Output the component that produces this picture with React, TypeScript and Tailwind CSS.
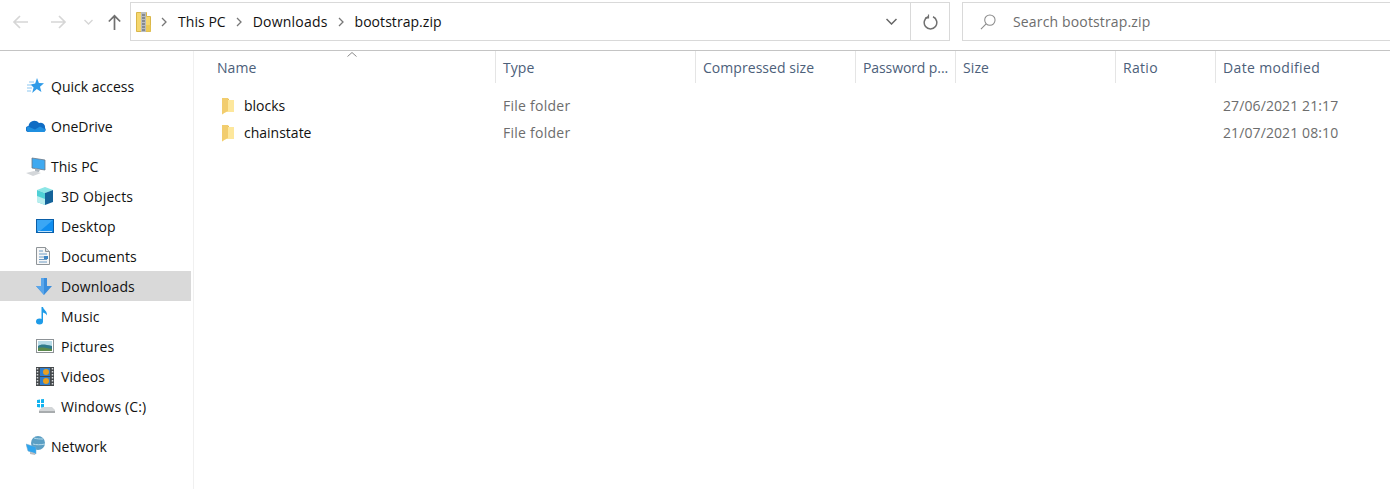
const font = { fontFamily: '"Open Sans", "Noto Sans", sans-serif' }

const COLS = [
  { label: 'Name', w: 'w-[302px] pl-[23px] tracking-[0.05px]' },
  { label: 'Type', w: 'w-[200px] pl-[7px] tracking-[0.05px]' },
  { label: 'Compressed size', w: 'w-[160px] pl-[7px] tracking-[0.05px]' },
  { label: 'Password p...', w: 'w-[100px] pl-[7px] tracking-[-0.1px]' },
  { label: 'Size', w: 'w-[160px] pl-[7px] tracking-[0.1px]' },
  { label: 'Ratio', w: 'w-[100px] pl-[7px] tracking-[0.3px]' },
  { label: 'Date modified', w: 'w-[175px] pl-[7px] tracking-[0.35px]' },
]

const Zip = () => (
  <svg width="15" height="20" viewBox="0 0 15 20">
    <path d="M.5.500h10v4h4v15H.5z" fill="#f5d76e" stroke="#d9b64a" />
    <rect x="10" y="13" width="4.500" height="6.500" fill="#ecca55" />
    <rect x="5" y="0" width="5" height="20" fill="#b9bcc0" />
    <path d="M6 3h3M6 6h3M6 9h3M6 12h3M6 15h3M6 18h3" stroke="#55585c" strokeWidth="1" />
  </svg>
)

const Folder = () => (
  <svg width="12" height="18" viewBox="0 0 12 18">
    <path d="M0 1h5l2 1v12l-7 2z" fill="#eac158" />
    <path d="M0 3h12v12H4l-4 2.500z" fill="#fde79c" />
    <path d="M0 1h6v13l-4 2-2 1.500z" fill="#f2cd6e" />
  </svg>
)

const Star = () => (
  <svg width="18" height="16" viewBox="0 0 18 16">
    <path d="M11 0l1.900 5 5.100.3-4 3.400 1.400 5.300-4.600-3L6.200 15l1.400-5.600L4.500 6.500l4.700-.9z" fill="#2f9be8" />
    <path d="M3 4h5M1 7h5M1 10h5M1 13h4" stroke="#8cc8f2" strokeWidth="1.100" />
  </svg>
)

const Cloud = () => (
  <svg width="20" height="14" viewBox="0 0 20 14">
    <path d="M3 13a3 3 0 0 1-.5-6A6 6 0 0 1 13 4a4.500 4.500 0 0 1 6 5 2.500 2.500 0 0 1-1 4z" fill="#0f6cc4" />
    <path d="M3 13a3 3 0 0 1-1-5.500l7 3 5-3 5.500 3a2.500 2.500 0 0 1-1.500 2.500z" fill="#1f8fe0" />
  </svg>
)

const Pc = () => (
  <svg width="20" height="19" viewBox="0 0 20 19">
    <path d="M6 1l13 2v10L6 11z" fill="#3fa9f0" stroke="#6b7785" strokeWidth="0.800" />
    <path d="M9 11.500l5 1-1 2.500-4-.5z" fill="#aeb6bd" />
    <path d="M0 16l8-2 7 2-8 3z" fill="#d4d7da" />
  </svg>
)

const Cube = () => (
  <svg width="18" height="18" viewBox="0 0 18 18">
    <path d="M9 0l8 3-8 3-8-3z" fill="#8ce6e6" />
    <path d="M1 3l8 3v12l-8-3z" fill="#4fd0d6" />
    <path d="M17 3L9 6v12l8-3z" fill="#14639a" />
    <path d="M1 9l8 3v6l-8-3z" fill="#b8eeee" />
  </svg>
)

const Desktop = () => (
  <svg width="18" height="14" viewBox="0 0 18 14">
    <rect x="0.500" y="0.500" width="17" height="13" fill="#0f8ef0" stroke="#0a5ea8" />
    <path d="M1 1h16L4 12H1z" fill="#3aa7f5" />
    <path d="M2 12.500h14" stroke="#bfe3fb" />
  </svg>
)

const Docs = () => (
  <svg width="14" height="18" viewBox="0 0 14 18">
    <path d="M.5.500h9l4 4v13H.5z" fill="#f7f7f7" stroke="#8f9498" />
    <path d="M9.500.500v4h4" fill="#dfe2e4" stroke="#8f9498" />
    <path d="M3 4h4M3 7h8M3 10h8M3 12.500h8M3 15h8" stroke="#6f9cc4" strokeWidth="1" />
    <rect x="8" y="9" width="4" height="3" fill="#3e86c4" />
  </svg>
)

const DownArrow = () => (
  <svg width="16" height="17" viewBox="0 0 16 17">
    <path d="M5 0h6v8h5l-8 9-8-9h5z" fill="#3a8ddc" />
    <path d="M5 0h3v17L0 8h5z" fill="#5aa6ea" />
  </svg>
)

const Music = () => (
  <svg width="12" height="18" viewBox="0 0 12 18">
    <ellipse cx="3.500" cy="14.500" rx="3.500" ry="3" fill="#1e9be8" />
    <path d="M5.500 14.500V0h1.500c.5 3 4.500 4 4 8.500C10 6.500 8.500 6 7 5.500v9z" fill="#1e9be8" />
  </svg>
)

const Pictures = () => (
  <svg width="18" height="14" viewBox="0 0 18 14">
    <rect x="0.500" y="0.500" width="17" height="13" fill="#fff" stroke="#8d9296" />
    <rect x="2" y="2" width="14" height="10" fill="#b8dbe8" />
    <path d="M2 7c3-2 6-2 14 0v5H2z" fill="#2f7a8c" />
    <path d="M2 9c4-1 8 0 14 1v2H2z" fill="#5c8a4c" />
  </svg>
)

const Videos = () => (
  <svg width="18" height="19" viewBox="0 0 18 19">
    <rect width="18" height="19" fill="#45494c" />
    <path d="M1.500 1v17M16.500 1v17" stroke="#d8dadc" strokeWidth="1.500" strokeDasharray="1.500 1.500" />
    <rect x="4" y="1" width="10" height="8" fill="#2f7fd0" />
    <rect x="4" y="10" width="10" height="8" fill="#2f7fd0" />
    <circle cx="10" cy="5" r="3" fill="#e8a020" />
    <circle cx="10" cy="14" r="3" fill="#e8a020" />
  </svg>
)

const Drive = () => (
  <svg width="20" height="16" viewBox="0 0 20 16">
    <path d="M1 2l3-.5V5H1zM5 1.300L8 1v4H5zM1 6h3v3.500L1 9zM5 6h3v4L5 9.500z" fill="#12b3f0" />
    <path d="M3 12l4-3h9l3 3v2.500H3z" fill="#d3d6d8" />
    <path d="M3 13h16v2H3z" fill="#a8acae" />
  </svg>
)

const Network = () => (
  <svg width="20" height="20" viewBox="0 0 20 20">
    <circle cx="12" cy="7" r="7" fill="#5b9fc4" />
    <path d="M8 2c3 1 6 1 9 1M7 8c3 1 8 1 12 0" stroke="#b8dcec" strokeWidth="1" fill="none" />
    <path d="M0 8l10 3v7L2 15z" fill="#2fa5ee" stroke="#78a8c8" strokeWidth="0.500" />
    <path d="M4 16l5 1v2l-5-1z" fill="#b8bcc0" />
  </svg>
)

function NavRow({ icon, label, sub, active }: { icon: React.ReactNode; label: string; sub?: boolean; active?: boolean }) {
  return (
    <div className={`flex h-[30px] items-center mr-[2px] ${active ? 'bg-[#d9d9d9]' : ''} ${sub ? 'pl-[36px] tracking-[0.1px]' : 'pl-[26px]'}`}>
      <div className="w-[25px] h-[20px] flex items-center justify-start shrink-0">{icon}</div>
      <span className="text-[14px] text-[#111111]">{label}</span>
    </div>
  )
}

const Sep = ({ className }: { className: string }) => (
  <svg className={className} width="6" height="10" viewBox="0 0 6 10" fill="none" stroke="#777" strokeWidth="1.300"><path d="M1 1l4 4-4 4" /></svg>
)

export default function App() {
  return (
    <div className="w-[1390px] h-[489px] bg-white overflow-hidden flex flex-col" style={font}>
      {/* barra de endereço */}
      <div className="h-[51px] border-b border-[#c4c4c4] flex shrink-0 pt-[2px] pl-[12px]">
        <div className="w-[118px] h-[39px] shrink-0 flex items-center">
          <svg width="16" height="14" viewBox="0 0 16 14" fill="none" stroke="#d6d6d6" strokeWidth="1.700"><path d="M16 7H2M8 1L2 7l6 6" /></svg>
          <svg className="ml-[23px]" width="16" height="14" viewBox="0 0 16 14" fill="none" stroke="#d6d6d6" strokeWidth="1.700"><path d="M0 7h14M8 1l6 6-6 6" /></svg>
          <svg className="ml-[17px]" width="9" height="6" viewBox="0 0 9 6" fill="none" stroke="#d6d6d6" strokeWidth="1.300"><path d="M.5 1l4 4 4-4" /></svg>
          <svg className="ml-[15px]" width="13" height="16" viewBox="0 0 13 16" fill="none" stroke="#707070" strokeWidth="1.700"><path d="M6.500 16V2M.8 7.500l5.700-5.700 5.700 5.700" /></svg>
        </div>
        <div className="w-[820px] h-[39px] shrink-0 border border-[#d9d9d9] flex items-center text-[14px] text-[#111111]">
          <div className="pl-[5px] w-[30px] flex items-center"><Zip /></div>
          <Sep className="" />
          <span className="ml-[11px] tracking-[0.05px]">This PC</span>
          <Sep className="ml-[10px]" />
          <span className="ml-[11px] tracking-[0.2px]">Downloads</span>
          <Sep className="ml-[10px]" />
          <span className="ml-[11px] tracking-[0.05px]">bootstrap.zip</span>
          <div className="ml-auto w-[39px] h-full flex items-center justify-center border-r border-[#d9d9d9]">
            <svg width="11" height="7" viewBox="0 0 11 7" fill="none" stroke="#666" strokeWidth="1.500"><path d="M.5 1l5 5 5-5" /></svg>
          </div>
          <div className="w-[38px] h-full flex items-center justify-center">
            <svg width="15" height="16" viewBox="0 0 15 16" fill="none" stroke="#707070" strokeWidth="1.500"><path d="M5 2.800a6.300 6.300 0 1 0 5 0" /><path d="M5.500 .5v3.500H2" strokeWidth="1.200" /></svg>
          </div>
        </div>
        <div className="ml-[12px] w-[430px] h-[39px] shrink-0 border border-[#d9d9d9] flex items-center pl-[17px]">
          <svg width="16" height="16" viewBox="0 0 17 17" fill="none" stroke="#8a8a8a" strokeWidth="1.100"><circle cx="10.500" cy="6.500" r="5.500" /><path d="M6.500 10.500L1 16" /></svg>
          <span className="ml-[17px] text-[14px] text-[#6d6d6d] tracking-[0.15px]">Search bootstrap.zip</span>
        </div>
      </div>

      <div className="flex flex-1 min-h-0">
        {/* painel de navegação */}
        <div className="w-[194px] shrink-0 border-r border-[#f0f0f0] pt-[20px] flex flex-col gap-[10px]">
          <NavRow icon={<Star />} label="Quick access" />
          <NavRow icon={<Cloud />} label="OneDrive" />
          <div>
            <NavRow icon={<Pc />} label="This PC" />
            <NavRow sub icon={<Cube />} label="3D Objects" />
            <NavRow sub icon={<Desktop />} label="Desktop" />
            <NavRow sub icon={<Docs />} label="Documents" />
            <NavRow sub active icon={<DownArrow />} label="Downloads" />
            <NavRow sub icon={<Music />} label="Music" />
            <NavRow sub icon={<Pictures />} label="Pictures" />
            <NavRow sub icon={<Videos />} label="Videos" />
            <NavRow sub icon={<Drive />} label="Windows (C:)" />
          </div>
          <NavRow icon={<Network />} label="Network" />
        </div>

        {/* lista de arquivos */}
        <div className="flex-1 relative">
          <svg className="absolute left-[153px] top-[1px]" width="10" height="5" viewBox="0 0 10 5" fill="none" stroke="#8a8a8a"><path d="M.5 4.500L5 .5l4.500 4" /></svg>
          <div className="flex h-[32px]">
            {COLS.map((c, i) => (
              <div key={c.label} className={`${c.w} shrink-0 flex items-center text-[14px] text-[#4c607a] ${i < COLS.length - 1 ? 'border-r border-[#e5e5e5]' : ''}`}>
                {c.label}
              </div>
            ))}
          </div>
          <div className="pt-[9px]">
            {[
              { nome: 'blocks', data: '27/06/2021 21:17' },
              { nome: 'chainstate', data: '21/07/2021 08:10' },
            ].map(r => (
              <div key={r.nome} className="flex h-[27px] items-center text-[14px]">
                <div className="w-[302px] shrink-0 pl-[28px] flex items-center text-[#111111]">
                  <Folder />
                  <span className="ml-[10px]">{r.nome}</span>
                </div>
                <div className="w-[720px] shrink-0 pl-[7px] text-[#6d6d6d] tracking-[0.25px]">File folder</div>
                <div className="pl-[7px] text-[#6d6d6d] tracking-[0.1px]">{r.data}</div>
              </div>
            ))}
          </div>
        </div>
      </div>
    </div>
  )
}
